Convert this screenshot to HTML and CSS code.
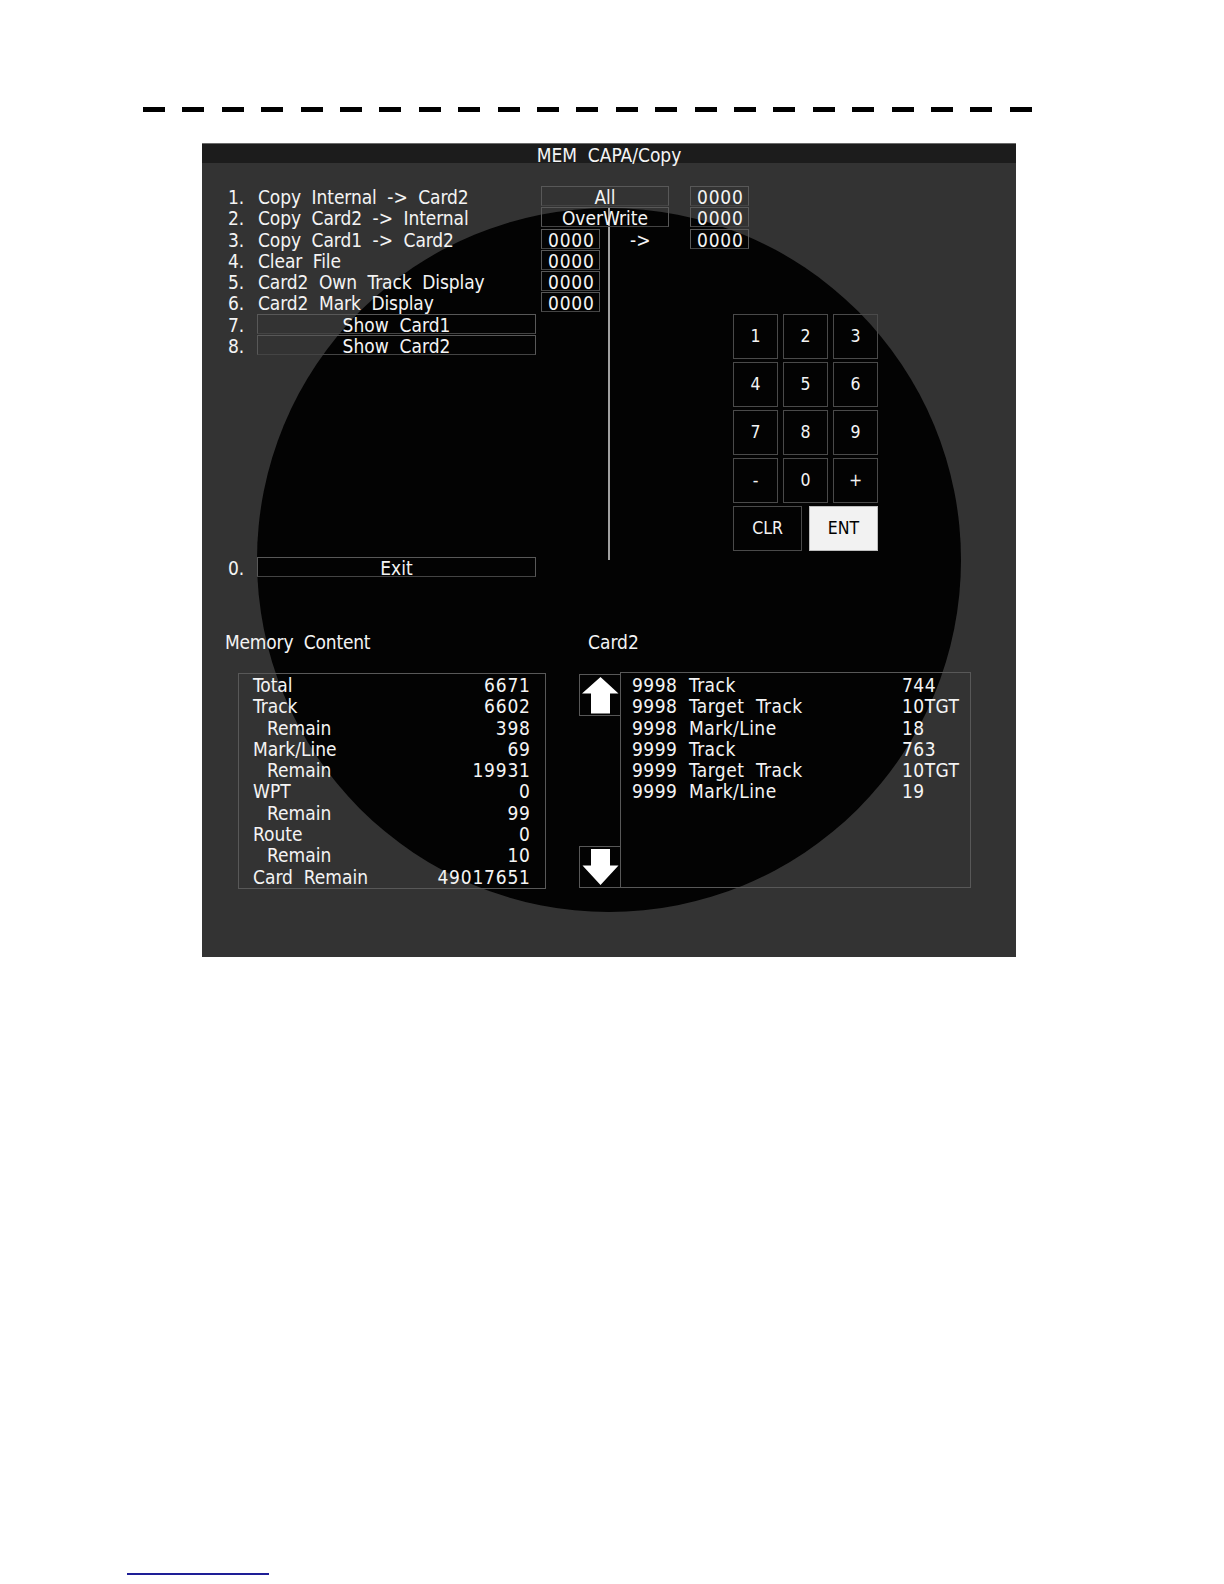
FILE: index.html
```html
<!DOCTYPE html>
<html lang="en">
<head>
<meta charset="utf-8">
<title>MEM CAPA/Copy</title>
<link rel="stylesheet" href="styles.css">
</head>
<body>
<div class="sheet">
  <div class="dashes"></div>
  <section class="screen">
    <div class="scope"></div>
    <div class="heading-line"></div>
    <header class="title">MEM  CAPA/Copy</header>
    <div class="content">
      <div class="menu">
        <span class="num r1">1.</span><span class="label r1">Copy  Internal  -&gt;  Card2</span>
        <span class="field wide r1">All</span>
        <span class="field val right r1">0000</span>

        <span class="num r2">2.</span><span class="label r2">Copy  Card2  -&gt;  Internal</span>
        <span class="field wide r2">OverWrite</span>
        <span class="field val right r2">0000</span>

        <span class="num r3">3.</span><span class="label r3">Copy  Card1  -&gt;  Card2</span>
        <span class="field val small r3">0000</span>
        <span class="arrow-txt r3">-&gt;</span>
        <span class="field val right r3">0000</span>

        <span class="num r4">4.</span><span class="label r4">Clear  File</span>
        <span class="field val small r4">0000</span>

        <span class="num r5">5.</span><span class="label r5">Card2  Own  Track  Display</span>
        <span class="field val small r5">0000</span>

        <span class="num r6">6.</span><span class="label r6">Card2  Mark  Display</span>
        <span class="field val small r6">0000</span>

        <span class="num r7">7.</span><span class="field bar r7">Show  Card1</span>
        <span class="num r8">8.</span><span class="field bar r8">Show  Card2</span>

        <div class="keypad">
          <div class="keys">
            <span class="key">1</span><span class="key">2</span><span class="key">3</span>
            <span class="key">4</span><span class="key">5</span><span class="key">6</span>
            <span class="key">7</span><span class="key">8</span><span class="key">9</span>
            <span class="key">-</span><span class="key">0</span><span class="key">+</span>
          </div>
          <div class="key-actions">
            <span class="key act">CLR</span><span class="key act enter">ENT</span>
          </div>
        </div>

        <span class="num r10">0.</span><span class="field bar r10">Exit</span>
      </div>

      <div class="lower">
        <div class="cap cap-mem">Memory  Content</div>
        <div class="cap cap-card">Card2</div>

        <div class="memory">
          <div class="mrow"><span>Total</span><span class="n">6671</span></div>
          <div class="mrow"><span>Track</span><span class="n">6602</span></div>
          <div class="mrow sub"><span>Remain</span><span class="n">398</span></div>
          <div class="mrow"><span>Mark/Line</span><span class="n">69</span></div>
          <div class="mrow sub"><span>Remain</span><span class="n">19931</span></div>
          <div class="mrow"><span>WPT</span><span class="n">0</span></div>
          <div class="mrow sub"><span>Remain</span><span class="n">99</span></div>
          <div class="mrow"><span>Route</span><span class="n">0</span></div>
          <div class="mrow sub"><span>Remain</span><span class="n">10</span></div>
          <div class="mrow"><span>Card  Remain</span><span class="n">49017651</span></div>
        </div>

        <div class="scroll">
          <div class="scroll-btn">
            <svg width="39" height="40" viewBox="0 0 39 40"><path d="M20.5 2 L38.5 18.5 L30 18.5 L30 38.5 L11 38.5 L11 18.5 L2 18.5 Z" fill="#fff"/></svg>
          </div>
          <div class="scroll-btn">
            <svg width="39" height="40" viewBox="0 0 39 40"><path d="M11 2 L30 2 L30 18.5 L38.5 18.5 L20.5 38 L2.5 18.5 L11 18.5 Z" fill="#fff"/></svg>
          </div>
        </div>

        <div class="list">
          <div class="lrow"><span>9998  Track</span><span>744</span></div>
          <div class="lrow"><span>9998  Target  Track</span><span>10TGT</span></div>
          <div class="lrow"><span>9998  Mark/Line</span><span>18</span></div>
          <div class="lrow"><span>9999  Track</span><span>763</span></div>
          <div class="lrow"><span>9999  Target  Track</span><span>10TGT</span></div>
          <div class="lrow"><span>9999  Mark/Line</span><span>19</span></div>
        </div>
      </div>
    </div>
  </section>
  <div class="footer-rule"></div>
</div>
</body>
</html>
```

FILE: styles.css
```css
* { box-sizing: border-box; }
html, body { margin: 0; padding: 0; background: #fff; }
body { font-family: "DejaVu Sans Condensed", "DejaVu Sans", sans-serif; font-stretch: condensed; }

.sheet { width: 1224px; height: 1584px; padding-top: 107px; overflow: hidden; }

.dashes {
  margin-left: 143px;
  width: 889px;
  height: 5px;
  background: repeating-linear-gradient(to right, #000 0 22px, transparent 22px 39.4px);
}

.screen {
  position: relative;
  margin: 31px 0 0 202px;
  width: 814px;
  height: 814px;
  background: #333;
  color: #f4f4f4;
  font-size: 19px;
  overflow: hidden;
}

.title, .num, .label, .arrow-txt, .field, .key, .cap, .mrow span, .lrow span { white-space: pre; }

.scope {
  position: absolute;
  left: 55px;
  top: 65px;
  width: 704px;
  height: 704px;
  border-radius: 50%;
  background: #030303;
}

.heading-line {
  position: absolute;
  left: 406px;
  top: 65px;
  width: 2px;
  height: 352px;
  background: #a0a0a0;
}

.title {
  position: relative;
  height: 20px;
  background: #1c1c1c;
  border-top: 1px solid #6a6a6a;
  text-align: center;
  line-height: 22px;
}

.content { position: relative; padding: 23px 0 0 25px; }

.menu {
  display: grid;
  grid-template-columns: 30px 279px 5px 59px 69px 21px 43px 16px 129px;
  grid-template-rows: repeat(8, 21.3px) 200.6px 21px;
}

.r1 { grid-row: 1; } .r2 { grid-row: 2; } .r3 { grid-row: 3; } .r4 { grid-row: 4; }
.r5 { grid-row: 5; } .r6 { grid-row: 6; } .r7 { grid-row: 7; } .r8 { grid-row: 8; }
.r10 { grid-row: 10; }

.num, .label, .arrow-txt { height: 20px; line-height: 23px; }
.num { grid-column: 1; padding-left: 1px; }
.label { grid-column: 2; padding-left: 1px; letter-spacing: -0.1px; }
.arrow-txt { grid-column: 5 / 6; padding-left: 30px; }

.field {
  height: 20px;
  border: 1px solid #585858;
  border-bottom-color: #444;
  line-height: 21px;
  text-align: center;
}
.field.val { text-align: left; padding-left: 6px; letter-spacing: 0.8px; }
.wide { grid-column: 4 / 6; }
.small { grid-column: 4 / 5; }
.right { grid-column: 7 / 9; }
.bar { grid-column: 2 / 3; }

.keypad {
  grid-column: 8 / 10;
  grid-row: 7 / 11;
  align-self: start;
  font-size: 17.5px;
}
.keys {
  display: grid;
  grid-template-columns: repeat(3, 45px);
  grid-auto-rows: 45px;
  column-gap: 5px;
  row-gap: 3px;
}
.key {
  display: flex;
  align-items: center;
  justify-content: center;
  border: 1px solid #4a4a4a;
}
.key-actions { display: flex; gap: 7px; margin-top: 3px; }
.key.act { width: 69px; height: 45px; }
.key.enter { background: #f2f2f2; color: #000; border-color: #bdbdbd; }

.lower {
  display: grid;
  grid-template-columns: 352px 41px 351px;
  grid-template-rows: 21px 216px;
  row-gap: 19px;
  margin-top: 54px;
}
.cap { line-height: 21px; }
.cap-mem { margin-left: -2px; letter-spacing: -0.2px; }
.cap-card { grid-column: 2 / 4; padding-left: 9px; }

.memory {
  margin: 1px 0 0 11px;
  width: 308px;
  height: 216px;
  border: 1px solid #585858;
  padding: 1px 15px 0 14px;
}
.mrow { display: flex; justify-content: space-between; height: 21.3px; line-height: 21.3px; }
.mrow.sub span:first-child { padding-left: 14px; }
.mrow .n { letter-spacing: 0.8px; margin-right: -0.8px; }

.scroll {
  display: flex;
  flex-direction: column;
  justify-content: space-between;
  height: 216px;
  padding: 2px 0 0;
}
.scroll-btn {
  width: 41px;
  height: 42px;
  border: 1px solid #585858;
  border-right: none;
}
.scroll-btn svg { display: block; }

.list {
  height: 216px;
  border: 1px solid #585858;
  padding: 2px 0 0 11px;
}
.lrow { display: grid; grid-template-columns: 270px auto; height: 21.3px; line-height: 21.3px; letter-spacing: 0.45px; }

.footer-rule {
  margin: 616px 0 0 127px;
  width: 142px;
  height: 2px;
  background: #1e1e96;
}
```
